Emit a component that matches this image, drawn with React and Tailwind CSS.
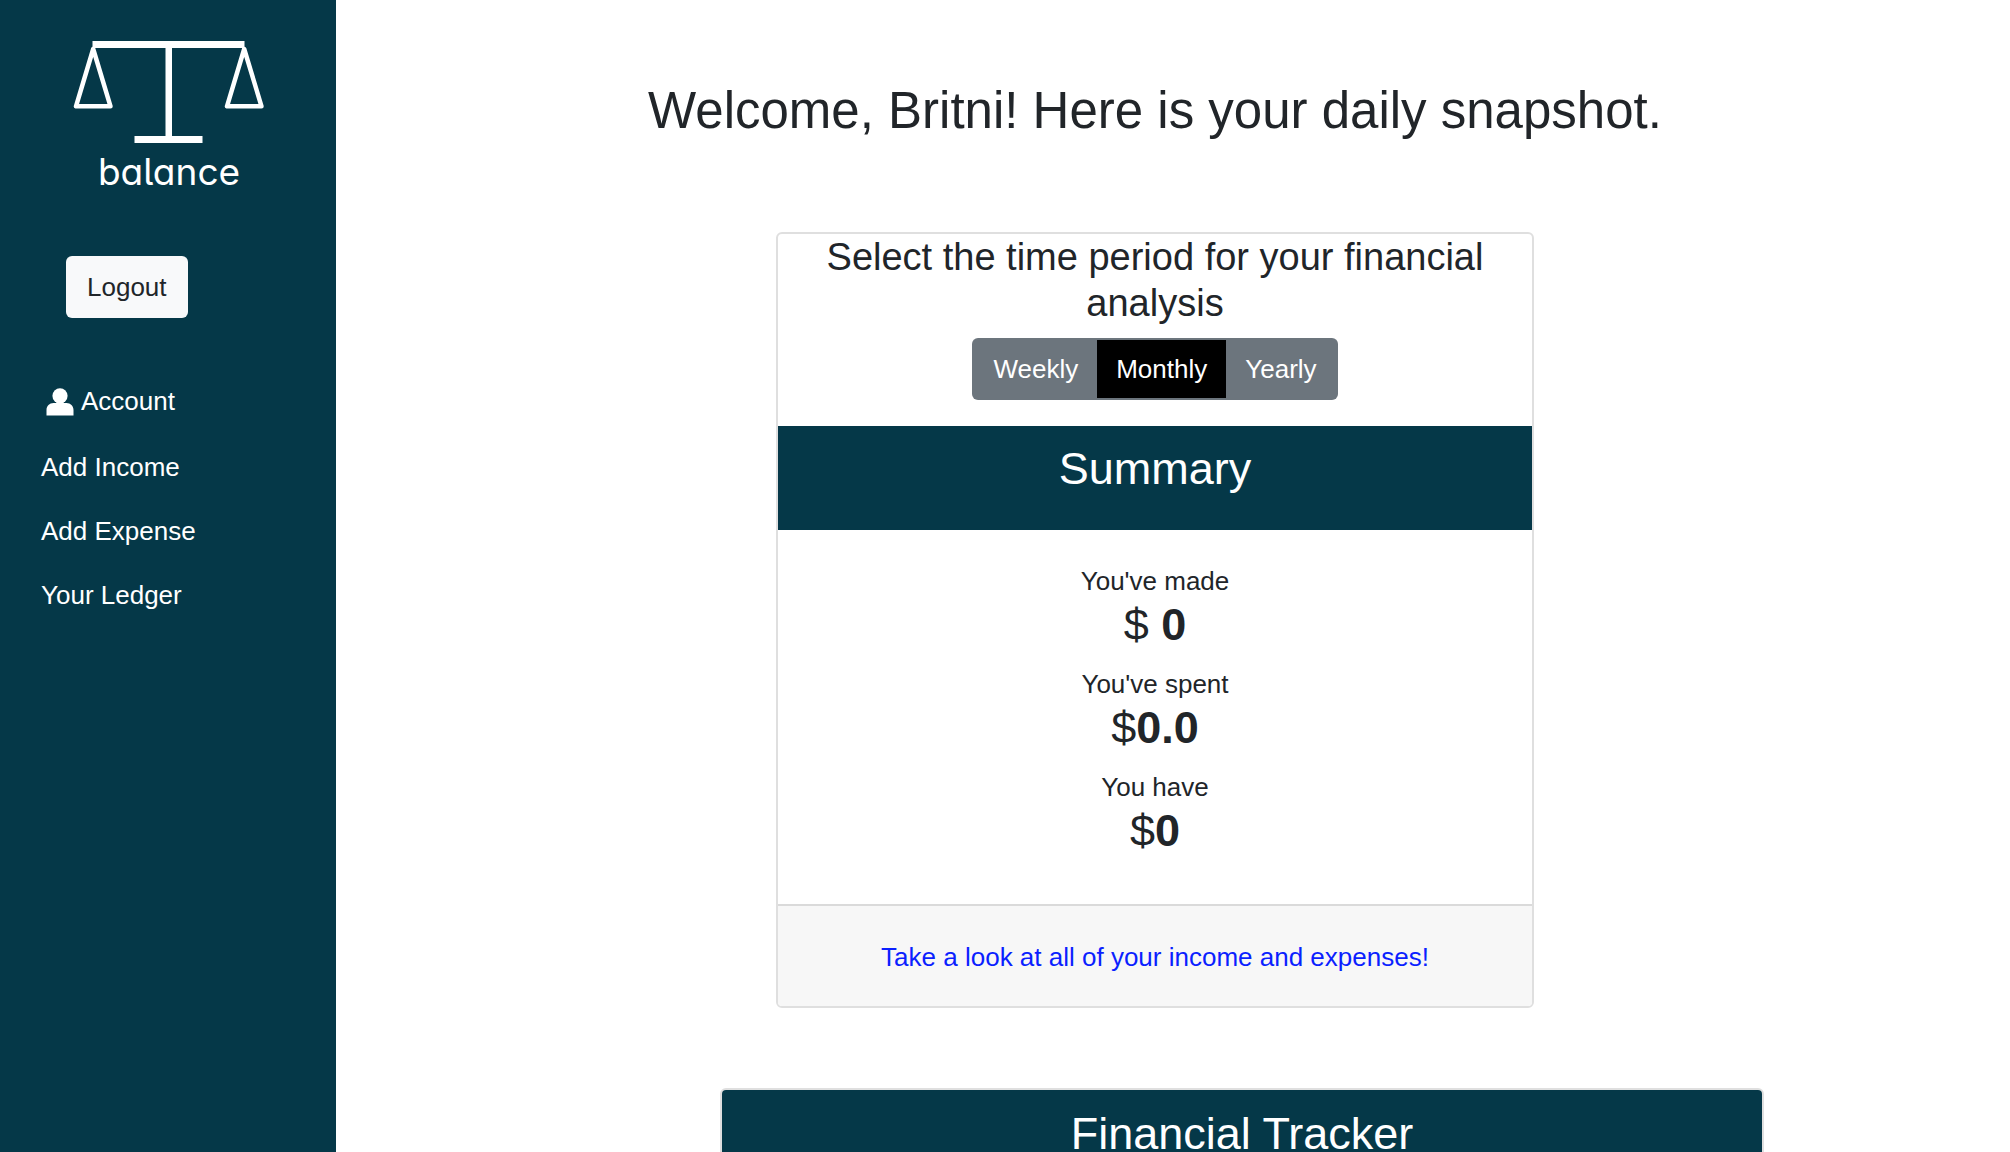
import React, { useState } from "react";

const periods = ["Weekly", "Monthly", "Yearly"];

const totals = [
  { label: "You've made", prefix: "$ ", amount: "0" },
  { label: "You've spent", prefix: "$", amount: "0.0" },
  { label: "You have", prefix: "$", amount: "0" },
];

function Logo() {
  return (
    <a href="#home" className="flex w-full flex-col items-center pl-0.5 text-white">
      <svg width="192" height="104" viewBox="0 0 192 104" fill="none" aria-hidden="true">
        <path d="M19.5 0H171.5V7H19.5ZM92.5 7H99V95H92.5ZM61.5 95H129.5V102H61.5Z" fill="currentColor" />
        <path
          d="M20.2 8L3 65.3H37.5ZM171.2 8L154 65.3H188.5Z"
          stroke="currentColor"
          strokeWidth="4.5"
          strokeLinejoin="round"
        />
      </svg>
      <span className="mt-[5px] font-['Inter',sans-serif] text-[37px] leading-[44px] [font-feature-settings:'cv11','cv05']">
        balance
      </span>
    </a>
  );
}

function PersonIcon() {
  return (
    <svg width="28" height="28" viewBox="0 0 28 28" fill="currentColor" aria-hidden="true">
      <circle cx="14" cy="7.8" r="7.6" />
      <path d="M10.5 13H17.5V15H20.5C24.5 15 27.5 18 27.5 22V27.5H0.5V22C0.5 18 3.5 15 7.5 15H10.5Z" />
    </svg>
  );
}

function Sidebar() {
  return (
    <aside className="flex w-[336px] shrink-0 flex-col bg-[#053848] pt-[41px] text-white">
      <Logo />
      <button type="button" className="mt-[62px] ml-[66px] self-start rounded-md bg-[#f8f9fa] px-[21px] py-3 leading-[38px] text-[#212529]">
        Logout
      </button>
      <nav className="mt-16 ml-[41px] flex flex-col items-start gap-[25px] leading-[39px]">
        <a href="#account" className="mb-0.5 ml-[5px] flex items-center gap-[7px]">
          <PersonIcon />
          Account
        </a>
        <a href="#income">Add Income</a>
        <a href="#expense">Add Expense</a>
        <a href="#ledger">Your Ledger</a>
      </nav>
    </aside>
  );
}

function PeriodPicker() {
  const [period, setPeriod] = useState("Monthly");
  return (
    <div role="group" aria-label="Time period" className="mx-auto mt-3 flex w-fit overflow-hidden rounded-md bg-[#6c757d] px-0.5 py-0.5 text-white">
      {periods.map((name) => (
        <button
          key={name}
          type="button"
          aria-pressed={period === name}
          onClick={() => setPeriod(name)}
          className={`px-[19px] py-2.5 leading-[38px] ${period === name ? "bg-black" : ""}`}
        >
          {name}
        </button>
      ))}
    </div>
  );
}

function SummaryCard() {
  return (
    <section className="mx-auto w-full max-w-[758px] overflow-hidden rounded-md border-2 border-[#dfdfdf] text-center">
      <h2 className="px-8 text-[38px] leading-[46px]">Select the time period for your financial analysis</h2>
      <PeriodPicker />
      <h2 className="mt-[26px] bg-[#053848] pt-4 pb-[34px] text-[45px] leading-[54px] text-white">Summary</h2>
      <dl className="flex flex-col gap-[15px] pt-[34px] pb-[46px]">
        {totals.map((row) => (
          <div key={row.label}>
            <dt className="leading-[34px]">{row.label}</dt>
            <dd className="text-[45px] leading-[54px]">
              {row.prefix}
              <strong>{row.amount}</strong>
            </dd>
          </div>
        ))}
      </dl>
      <footer className="border-t-2 border-[#dadada] bg-[#f7f7f7] pt-8 pb-[29px] leading-[39px]">
        <a href="#ledger" className="text-[#0b1fff]">
          Take a look at all of your income and expenses!
        </a>
      </footer>
    </section>
  );
}

function TrackerCard() {
  return (
    <section className="mt-20 pl-[174px]">
      <div className="mx-auto w-full max-w-[1044px] overflow-hidden rounded-md border-2 border-[#dfdfdf] text-center">
        <h2 className="bg-[#053848] pt-[17px] pb-[33px] text-[45px] leading-[54px] text-white">Financial Tracker</h2>
      </div>
    </section>
  );
}

export default function App() {
  return (
    <div className="flex h-screen overflow-hidden bg-white font-['Liberation_Sans',Arial,sans-serif] text-[26px] text-[#212529]">
      <Sidebar />
      <main className="min-w-0 flex-1 overflow-hidden pt-20 pr-9">
        <h1 className="mb-[91px] text-center text-[51px] leading-[61px]">Welcome, Britni! Here is your daily snapshot.</h1>
        <SummaryCard />
        <TrackerCard />
      </main>
    </div>
  );
}
